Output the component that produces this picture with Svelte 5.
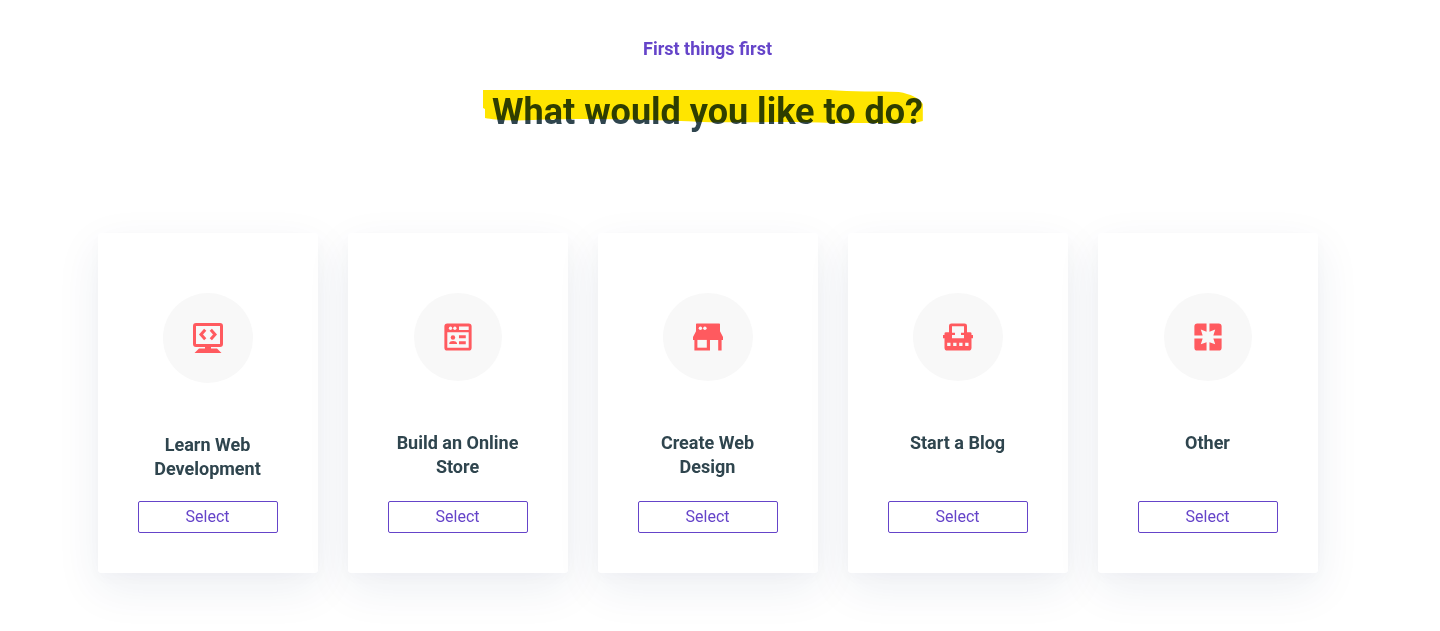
<script>
  const options = [
    { icon: 'code', title: 'Learn Web Development', width: 30, height: 30, viewBox: '0 0 30 30' },
    { icon: 'store', title: 'Build an Online Store', width: 28, height: 28, viewBox: '-0.4 -0.4 28.8 28.8' },
    { icon: 'shop', title: 'Create Web Design', width: 30, height: 28, viewBox: '0 -0.4 30 28.8' },
    { icon: 'blog', title: 'Start a Blog', width: 30, height: 28, viewBox: '0 -0.4 30 28.8' },
    { icon: 'other', title: 'Other', width: 28, height: 28, viewBox: '-0.4 -0.4 28.8 28.8' }
  ];
</script>

<main>
  <header>
    <p class="eyebrow">First things first</p>
    <h1>
      What would you like to do?
      <svg class="marker" viewBox="0 0 440 34" preserveAspectRatio="none" aria-hidden="true">
        <path d="M0 0H345C370 2 395 1 416 2C428 4 436 8 440 14V31L432 33H350C300 31 270 33 220 32C160 29 90 28 50 30C30 31 12 30 2 28V19L0 18Z" />
      </svg>
    </h1>
  </header>

  <ul class="cards">
    {#each options as option, i}
      <li class="card">
        <span class="disc">
          <svg width={option.width} height={option.height} viewBox={option.viewBox} preserveAspectRatio="none" aria-hidden="true">
            {#if option.icon === 'code'}
              <rect class="line" x="1.5" y="1.5" width="27" height="21" rx="1.5" />
              <path d="M12 24H18V25.5H24L28.5 30H1.5L6 25.5H12Z" />
              <path class="line" d="M12.2 6.8L8 11.5L12.2 16.2M17.8 6.8L22 11.5L17.8 16.2" />
            {:else if option.icon === 'store'}
              <path fill-rule="evenodd" d="M3 0H25Q28 0 28 3V25Q28 28 25 28H3Q0 28 0 25V3Q0 0 3 0ZM3 9V25H25V9ZM15 3.3V6.7H25V3.3Z" />
              <circle class="hole" cx="6.3" cy="5" r="1.7" />
              <circle class="hole" cx="10.8" cy="5" r="1.7" />
              <circle cx="8.8" cy="14.6" r="2.3" />
              <path d="M5 21.3V20.5Q5.5 18 8.9 18T13 20.5V21.3ZM15 12.3H22V15.4H15ZM15 18.4H22V21.4H15Z" />
            {:else if option.icon === 'shop'}
              <path d="M3.8 0H26.2Q27 0 27 1V8L30 14V17H28.6V28H25.2V17H17V28H1.4V17H0V14L3 8V1Q3 0 3.8 0Z" />
              <path class="hole" d="M4.4 17H13.8V25H4.4Z" />
              <circle class="hole" cx="7.4" cy="5" r="1.7" />
              <circle class="hole" cx="11.9" cy="5" r="1.7" />
            {:else if option.icon === 'blog'}
              <path d="M8.5 0H21.5Q24 0 24 2.5V9H27Q28.5 9 28.5 10.5V12H30V15.2H28.5V25Q28.5 28 25.5 28H4.5Q1.5 28 1.5 25V15.2H0V12H1.5V10.5Q1.5 9 3 9H6V2.5Q6 0 8.5 0Z" />
              <path class="hole" d="M9 3H21V9.5H18V12H21V15.2H9V12H12V9.5H9ZM4.2 20H7.5V23.3H4.2ZM10.2 20H13.5V23.3H10.2ZM16.2 20H19.5V23.3H16.2ZM22.2 20H25.5V23.3H22.2Z" />
            {:else}
              <path d="M3 0H12.5V8.5L6.6 6.4L8.5 12.5H0V3Q0 0 3 0ZM25 0H15.5V8.5L21.4 6.4L19.5 12.5H28V3Q28 0 25 0ZM3 28H12.5V19.5L6.6 21.4L8.5 15.5H0V25Q0 28 3 28ZM25 28H15.5V19.5L21.4 21.4L19.5 15.5H28V25Q28 28 25 28Z" />
            {/if}
          </svg>
        </span>
        <h2 id="option-{i}">{option.title}</h2>
        <button type="button" aria-describedby="option-{i}">Select</button>
      </li>
    {/each}
  </ul>
</main>

<style>
  :global(body) {
    margin: 0;
    background: #fff;
  }

  main {
    box-sizing: border-box;
    padding: 37px 25px 58px 0;
    font-family: Roboto, 'Liberation Sans', sans-serif;
    color: #2f454e;
  }

  header {
    display: flex;
    flex-direction: column;
    align-items: center;
    text-align: center;
  }

  .eyebrow {
    margin: 0;
    font-size: 18px;
    line-height: 24px;
    font-weight: 700;
    color: #6544c9;
  }

  h1 {
    position: relative;
    margin: 28px 0 0;
    font-size: 36px;
    line-height: 46px;
    font-weight: 700;
  }

  .marker {
    position: absolute;
    left: -9px;
    top: 1px;
    width: calc(100% + 9px);
    height: 34px;
    fill: #ffe500;
    mix-blend-mode: multiply;
  }

  .cards {
    display: flex;
    flex-wrap: wrap;
    justify-content: center;
    gap: 30px;
    margin: 98px 0 0;
    padding: 0;
    list-style: none;
  }

  .card {
    box-sizing: border-box;
    display: flex;
    flex-direction: column;
    align-items: center;
    width: 220px;
    min-height: 340px;
    padding: 60px 40px 40px;
    border-radius: 3px;
    background: #fff;
    box-shadow: 0 15px 45px rgba(31, 45, 100, 0.08), 0 5px 15px rgba(31, 45, 100, 0.02);
  }

  .disc {
    display: flex;
    padding: 30px;
    border-radius: 50%;
    background: #f8f8f8;
  }

  .disc svg {
    display: block;
    fill: #ff5a5f;
  }

  .disc .line {
    fill: none;
    stroke: #ff5a5f;
    stroke-width: 3;
  }

  .disc .hole {
    fill: #f8f8f8;
  }

  h2 {
    margin: 50px 0 20px;
    font-size: 18px;
    line-height: 24px;
    font-weight: 700;
    text-align: center;
  }

  button {
    width: 100%;
    margin-top: auto;
    padding: 5px 12px;
    border: 1px solid #6544c9;
    border-radius: 2px;
    background: transparent;
    font: inherit;
    font-size: 16px;
    line-height: 20px;
    color: #6544c9;
    cursor: pointer;
  }
</style>
